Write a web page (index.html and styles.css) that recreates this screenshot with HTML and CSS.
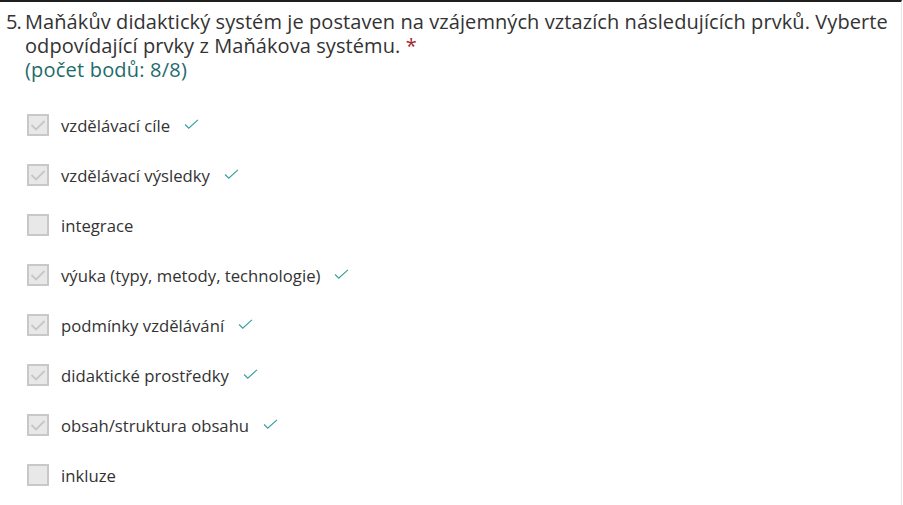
FILE: index.html
```html
<!DOCTYPE html>
<html lang="cs">
<head>
<meta charset="utf-8">
<link rel="stylesheet" href="styles.css">
</head>
<body>
<div class="card">
  <div class="question">
    <span class="num">5.</span>
    <div class="qbody">
      <div class="qtext">Maňákův didaktický systém je postaven na vzájemných vztazích následujících prvků. Vyberte odpovídající prvky z Maňákova systému. <span class="req">*</span></div>
      <div class="points">(počet bodů: 8/8)</div>
    </div>
  </div>
  <ul class="options">
    <li class="opt checked"><span class="box"><svg viewBox="0 0 18 18"><path d="M2.5 9 L7 13.5 L15.5 5" /></svg></span><span class="label">vzdělávací cíle</span><svg class="ok" viewBox="0 0 16 12"><path d="M1 6 L5 10 L15 1"/></svg></li>
    <li class="opt checked"><span class="box"><svg viewBox="0 0 18 18"><path d="M2.5 9 L7 13.5 L15.5 5" /></svg></span><span class="label">vzdělávací výsledky</span><svg class="ok" viewBox="0 0 16 12"><path d="M1 6 L5 10 L15 1"/></svg></li>
    <li class="opt"><span class="box"></span><span class="label">integrace</span></li>
    <li class="opt checked"><span class="box"><svg viewBox="0 0 18 18"><path d="M2.5 9 L7 13.5 L15.5 5" /></svg></span><span class="label">výuka (typy, metody, technologie)</span><svg class="ok" viewBox="0 0 16 12"><path d="M1 6 L5 10 L15 1"/></svg></li>
    <li class="opt checked"><span class="box"><svg viewBox="0 0 18 18"><path d="M2.5 9 L7 13.5 L15.5 5" /></svg></span><span class="label">podmínky vzdělávání</span><svg class="ok" viewBox="0 0 16 12"><path d="M1 6 L5 10 L15 1"/></svg></li>
    <li class="opt checked"><span class="box"><svg viewBox="0 0 18 18"><path d="M2.5 9 L7 13.5 L15.5 5" /></svg></span><span class="label">didaktické prostředky</span><svg class="ok" viewBox="0 0 16 12"><path d="M1 6 L5 10 L15 1"/></svg></li>
    <li class="opt checked"><span class="box"><svg viewBox="0 0 18 18"><path d="M2.5 9 L7 13.5 L15.5 5" /></svg></span><span class="label">obsah/struktura obsahu</span><svg class="ok" viewBox="0 0 16 12"><path d="M1 6 L5 10 L15 1"/></svg></li>
    <li class="opt"><span class="box"></span><span class="label">inkluze</span></li>
  </ul>
</div>
</body>
</html>
```
FILE: styles.css
```css
html, body {
  margin: 0;
  padding: 0;
  background: #ffffff;
}
body {
  font-family: "Open Sans", "Noto Sans", sans-serif;
  color: #333333;
  width: 903px;
  height: 505px;
  overflow: hidden;
}
.card {
  box-sizing: border-box;
  width: 902px;
  height: 505px;
  border-top: 2px solid #1f1f1f;
  border-right: 1px solid #e6e6e6;
  padding: 8px 0 0 6px;
}
.question {
  display: flex;
  align-items: flex-start;
}
.num {
  font-size: 20px;
  line-height: 24px;
  width: 19px;
  flex: none;
  letter-spacing: -1px;
}
.qbody {
  flex: 1;
  padding-right: 10px;
}
.qtext {
  font-size: 20px;
  line-height: 24px;
  letter-spacing: 0.08px;
  color: #333333;
}
.req {
  color: #a4262c;
}
.points {
  font-size: 20px;
  line-height: 24px;
  letter-spacing: 0.2px;
  color: #1e6b6b;
}
.options {
  list-style: none;
  margin: 18px 0 0 0;
  padding: 0 0 0 21px;
}
.opt {
  display: flex;
  align-items: center;
  height: 50px;
}
.box {
  box-sizing: border-box;
  width: 22px;
  height: 22px;
  border: 2px solid #c8c8c8;
  background: #e8e8e8;
  flex: none;
  display: flex;
}
.box svg {
  width: 18px;
  height: 18px;
}
.box path {
  fill: none;
  stroke: #c6c6c6;
  stroke-width: 1.8;
}
.label {
  margin-left: 12px;
  font-size: 16.7px;
  color: #333333;
}
.ok {
  width: 15px;
  height: 11px;
  margin-left: 14px;
  margin-top: -2px;
}
.ok path {
  fill: none;
  stroke: #3a9e9e;
  stroke-width: 1.3;
}
```
